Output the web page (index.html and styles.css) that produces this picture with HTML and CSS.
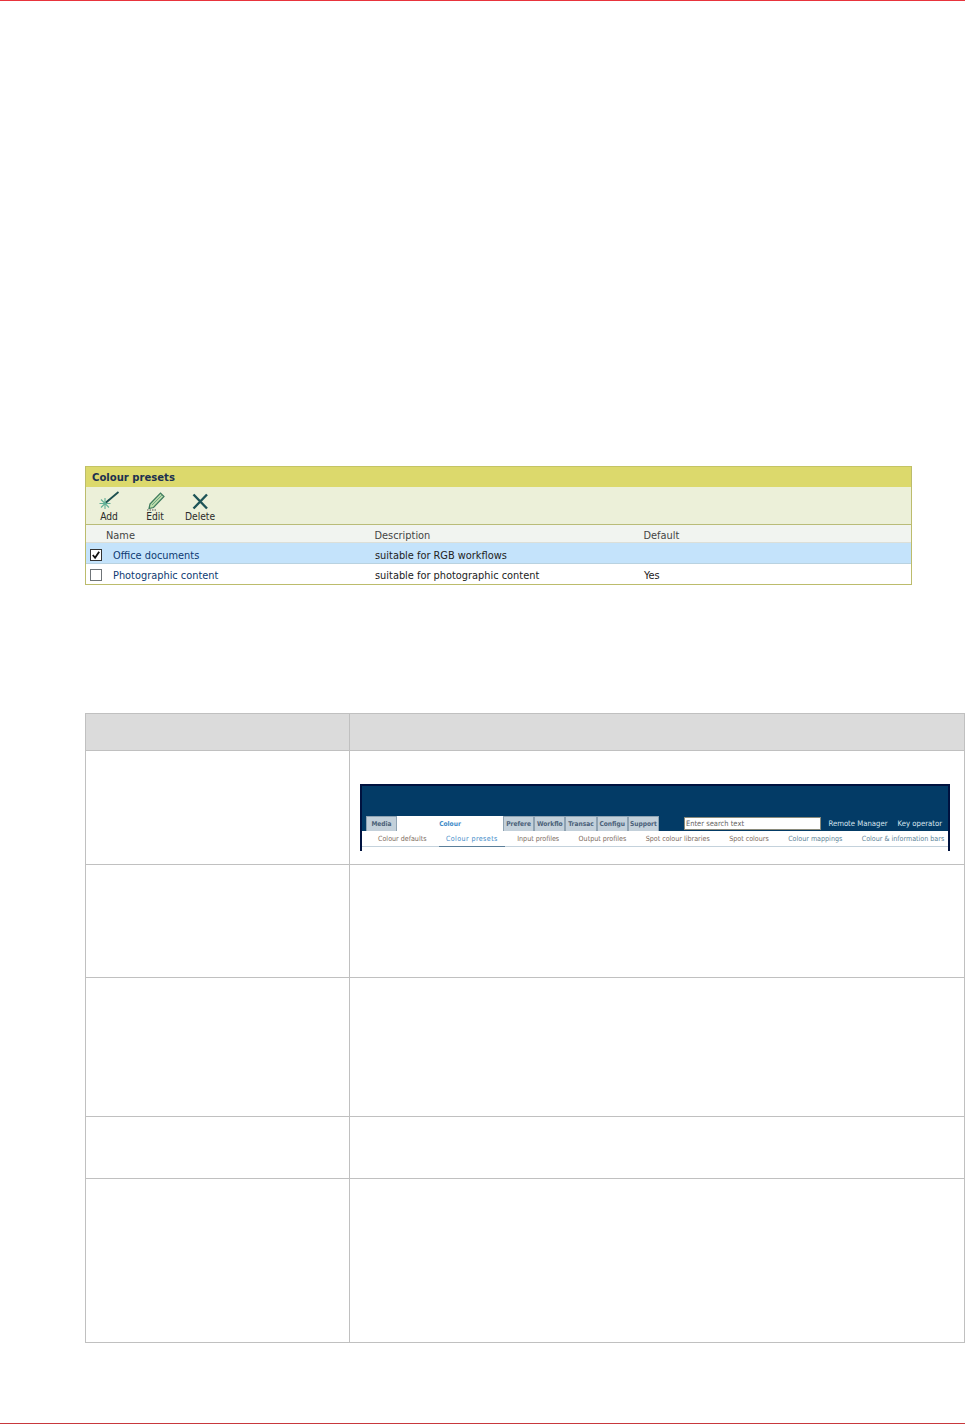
FILE: index.html
```html
<!DOCTYPE html>
<html lang="en">
<head>
<meta charset="utf-8">
<title>Colour presets</title>
<link rel="stylesheet" href="styles.css">
</head>
<body>
<div class="page">
  <section class="panel">
    <h2 class="panel-title">Colour presets</h2>
    <div class="toolbar">
      <div class="tool">
        <svg class="tool-icon" viewBox="0 0 24 20"><g stroke="#62b096" stroke-width="1.100" fill="none"><path d="M8 7v11M2.500 12.500h11M4 8.500l8 8M12 8.500l-8 8"/></g><path d="M9 11.500L21.500 1" stroke="#1d4f4f" stroke-width="1.800" fill="none"/></svg>
        <span>Add</span>
      </div>
      <div class="tool tool-edit">
        <svg class="tool-icon" viewBox="0 0 24 20"><path d="M7 13L17.500 2l3.500 3.500L10.500 16.500 6 17.500z" fill="#bcdcaa" stroke="#3d7a5c" stroke-width="1.200"/><path d="M9 14L19 4" stroke="#6da585" stroke-width="1" fill="none"/><path d="M4 19h10" stroke="#555" stroke-width="1" stroke-dasharray="1.500 1" fill="none"/></svg>
        <span>Edit</span>
      </div>
      <div class="tool tool-delete">
        <svg class="tool-icon" viewBox="0 0 24 20"><path d="M5.500 3.500L19 17.500M19 3.500L5.500 17.500" stroke="#1d5457" stroke-width="2.400" fill="none"/></svg>
        <span>Delete</span>
      </div>
    </div>
    <div class="preset-row preset-head">
      <span></span><span>Name</span><span>Description</span><span>Default</span>
    </div>
    <div class="preset-row preset-item preset-selected">
      <span class="check checked"><svg viewBox="0 0 11 11"><path d="M2 5.500l2.500 3L9 2" stroke="#111" stroke-width="2" fill="none"/></svg></span>
      <a class="preset-link">Office documents</a><span>suitable for RGB workflows</span><span></span>
    </div>
    <div class="preset-row preset-item">
      <span class="check"></span>
      <a class="preset-link">Photographic content</a><span>suitable for photographic content</span><span>Yes</span>
    </div>
  </section>

  <div class="doc-table">
    <div class="doc-row row-head"><div class="cell-a"></div><div class="cell-b"></div></div>
    <div class="doc-row row-1">
      <div class="cell-a"></div>
      <div class="cell-b">
        <div class="shot">
          <div class="shot-tabs">
            <span class="tab tab-media">Media</span>
            <span class="tab tab-active">Colour</span>
            <span class="tab tab-w1">Prefere</span>
            <span class="tab tab-w2">Workflo</span>
            <span class="tab tab-w2">Transac</span>
            <span class="tab tab-w2">Configu</span>
            <span class="tab tab-w3">Support</span>
            <span class="search">Enter search text</span>
            <span class="shot-link link-rm">Remote Manager</span>
            <span class="shot-link">Key operator</span>
          </div>
          <div class="shot-sub">
            <span class="sub sub-brown">Colour defaults</span>
            <span class="sub sub-active">Colour presets</span>
            <span class="sub sub-brown">Input profiles</span>
            <span class="sub sub-brown">Output profiles</span>
            <span class="sub sub-brown">Spot colour libraries</span>
            <span class="sub sub-brown">Spot colours</span>
            <span class="sub sub-blue">Colour mappings</span>
            <span class="sub sub-blue">Colour &amp; information bars</span>
          </div>
        </div>
      </div>
    </div>
    <div class="doc-row row-2"><div class="cell-a"></div><div class="cell-b"></div></div>
    <div class="doc-row row-3"><div class="cell-a"></div><div class="cell-b"></div></div>
    <div class="doc-row row-4"><div class="cell-a"></div><div class="cell-b"></div></div>
    <div class="doc-row row-5"><div class="cell-a"></div><div class="cell-b"></div></div>
  </div>
</div>
</body>
</html>
```
FILE: styles.css
```css
* { box-sizing: border-box; }
html, body { margin: 0; padding: 0; background: #fff; }
body { font-family: "DejaVu Sans Condensed", "DejaVu Sans", sans-serif; }
.page {
  width: 965px;
  height: 1424px;
  overflow: hidden;
  border-top: 1px solid #e8343c;
  border-bottom: 1px solid #c8383c;
  padding: 465px 0 0 85px;
}
.panel {
  width: 827px;
  height: 119px;
  border: 1px solid #bcbc6c;
  border-top-color: #c4c464;
  font-size: 10.900px;
  color: #222;
}
.panel-title {
  margin: 0;
  height: 20px;
  padding: 0 0 0 6px;
  background: #dcd96c;
  color: #1c3050;
  font-size: 11.200px;
  font-weight: 700;
  line-height: 21px;
}
.toolbar {
  height: 38px;
  background: #ecf0d9;
  border-bottom: 1px solid #b9bc78;
  display: flex;
  padding: 4px 0 0 11px;
}
.tool {
  width: 24px;
  display: flex;
  flex-direction: column;
  align-items: center;
  font-size: 10.200px;
  line-height: 11px;
  color: #2a2a2a;
}
.tool-edit { margin-left: 22px; }
.tool-delete { margin-left: 17px; width: 32px; }
.tool-icon { width: 24px; height: 20px; display: block; flex: none; }
.preset-row {
  display: grid;
  align-items: center;
  padding-top: 2px;
}
.preset-head {
  height: 18px;
  padding-top: 3px;
  background: #f1f4f0;
  border-bottom: 1px solid #dcdfd8;
  color: #444;
  grid-template-columns: 20px 268.500px 269px 1fr;
}
.preset-item {
  height: 20px;
  padding-left: 4px;
  grid-template-columns: 23px 262px 269px 1fr;
}
.preset-selected {
  height: 21px;
  padding-top: 4px;
  background: #c4e3fb;
  border-bottom: 1px solid #b9d2e0;
}
.preset-link { color: #0e3a72; }
.check {
  width: 12px;
  height: 12px;
  border: 1px solid #6f7478;
  background: #fff;
  display: block;
}
.checked { border-color: #333; }
.check svg { display: block; width: 10px; height: 10px; }

.doc-table {
  width: 880px;
  margin-top: 128px;
  border-top: 1px solid #c0c0c0;
  border-left: 1px solid #c0c0c0;
  border-right: 1px solid #c0c0c0;
}
.doc-row {
  display: grid;
  grid-template-columns: 264px 1fr;
  border-bottom: 1px solid #c0c0c0;
}
.cell-a { border-right: 1px solid #c0c0c0; }
.row-head { height: 37px; background: #dbdbdb; }
.row-1 { height: 114px; }
.row-2 { height: 113px; }
.row-3 { height: 139px; }
.row-4 { height: 62px; }
.row-5 { height: 164px; }
.cell-b { padding: 33px 0 0 10px; }
.shot {
  width: 590px;
  height: 67px;
  background: #033b66;
  border: 2px solid #00123f;
  border-bottom: 0;
  font-size: 7.700px;
}
.shot-tabs {
  display: flex;
  align-items: flex-start;
  margin-top: 30px;
  padding-left: 4px;
  height: 15px;
}
.tab {
  height: 15px;
  flex: none;
  background: #c3d0da;
  border: 1px solid #8ea2b2;
  border-bottom: 0;
  color: #4a6078;
  font-size: 6.600px;
  font-weight: 700;
  line-height: 14px;
  text-align: center;
  white-space: nowrap;
}
.tab-media { width: 31px; }
.tab-active { width: 106px; background: #fff; border-color: #fff; color: #3d8ac8; }
.tab-w1, .tab-w2, .tab-w3 { width: 31.200px; }
.search {
  width: 137px;
  height: 13px;
  margin: 1px 0 0 25px;
  background: #fff;
  border: 1px solid #8a8a7a;
  color: #666;
  font-size: 7.500px;
  line-height: 11px;
  padding-left: 1px;
}
.shot-link {
  color: #d8e6f0;
  margin-left: 10px;
  white-space: nowrap;
  line-height: 15px;
}
.link-rm { margin-left: 7.500px; }
.shot-sub {
  display: flex;
  height: 20px;
  padding: 0 0 0 16px;
  gap: 19.400px;
  background: linear-gradient(#fff 15px, #c4d2dc 15px, #c4d2dc 16px, #fff 16px);
}
.sub {
  white-space: nowrap;
  font-size: 7.100px;
  line-height: 16px;
  height: 16px;
  color: #7c6a5c;
}
.sub-active {
  color: #3d8ac8;
  letter-spacing: 0.400px;
  border-bottom: 1px solid #5b7f9a;
  padding: 0 7px;
  margin: 0 -7px;
}
.sub-blue { color: #5a7f96; }
```
